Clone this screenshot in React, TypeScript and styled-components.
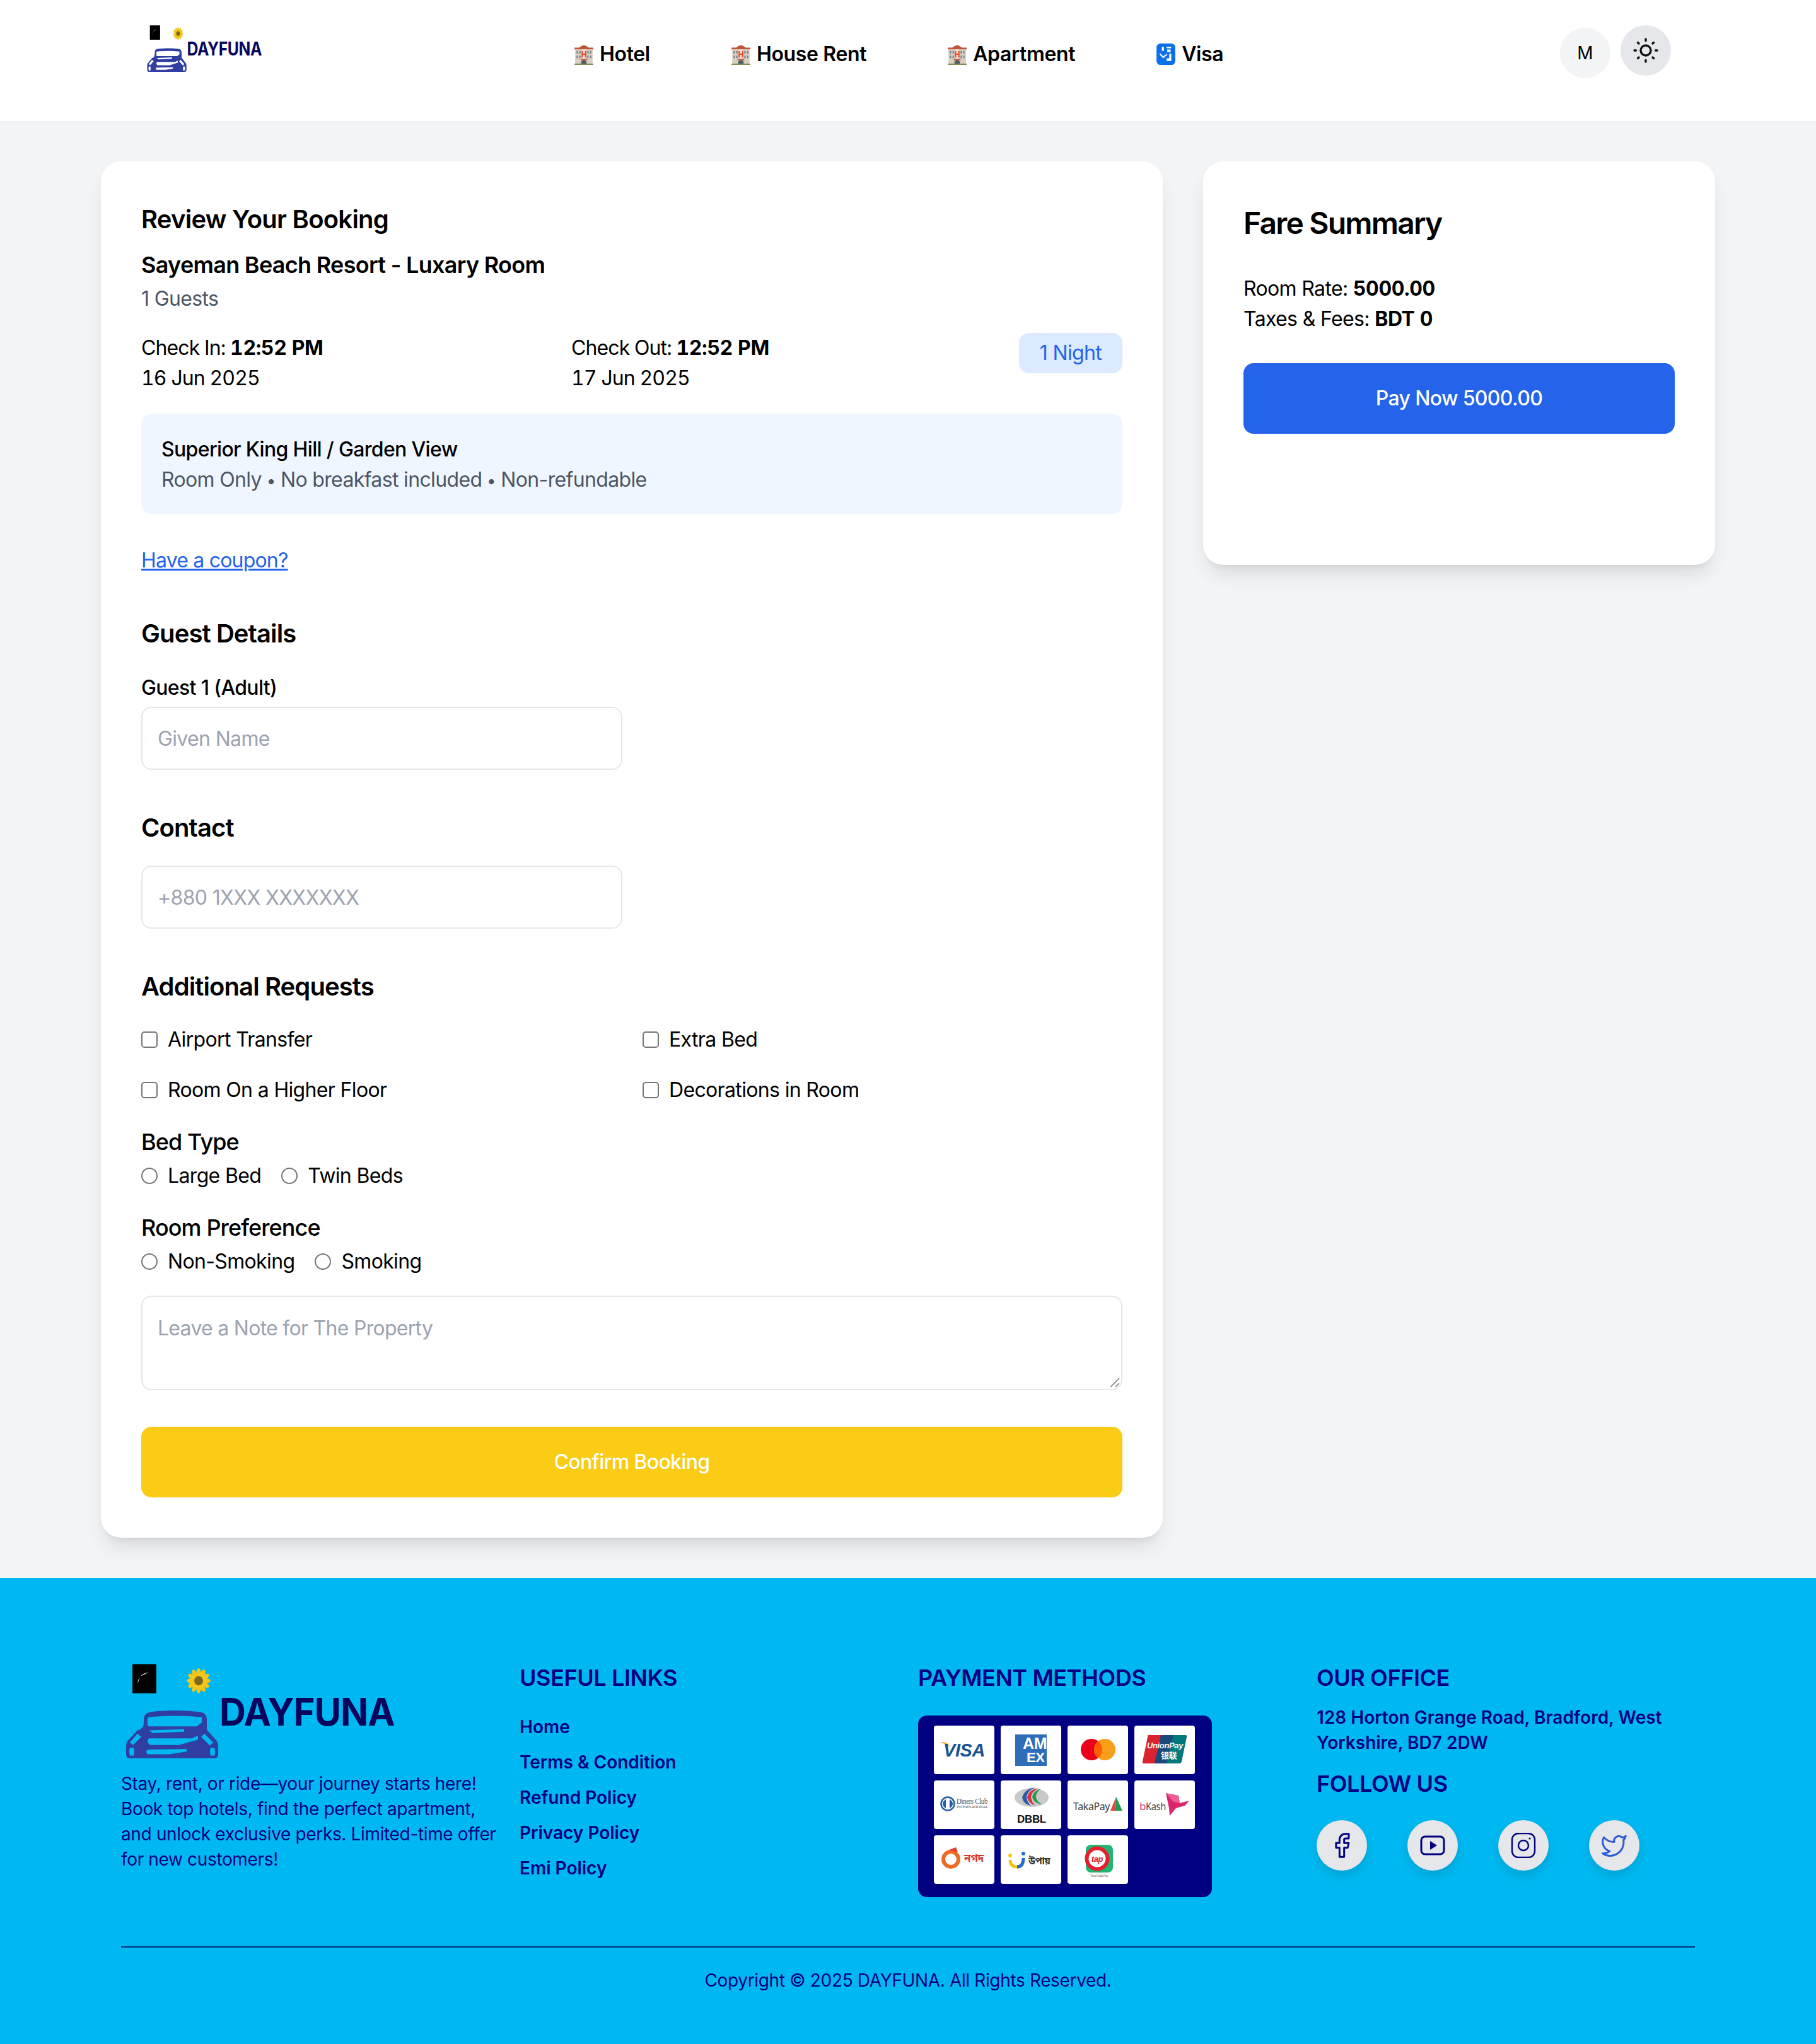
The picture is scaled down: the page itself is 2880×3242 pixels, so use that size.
import React from 'react';
import styled, { createGlobalStyle } from 'styled-components';
import { Facebook, Twitter } from 'lucide-react';

const NAVY = '#000080';

const GlobalStyle = createGlobalStyle`
  * { box-sizing: border-box; }
  html, body { margin: 0; padding: 0; }
  body {
    background: #f3f4f6;
    color: #000;
    font-family: Inter, "Noto Sans", sans-serif;
    font-size: 32px;
    line-height: 48px;
    letter-spacing: -0.65px;
  }
  b { letter-spacing: -0.4px; font-variant-numeric: tabular-nums; }
`;

const Header = styled.header`
  display: flex;
  align-items: flex-start;
  height: 192px;
  padding: 34px 230px 0 230px;
  background: #fff;
  box-shadow: 0 2px 4px rgba(0, 0, 0, 0.02);
`;

const LogoSlot = styled.div`
  flex: none;
  width: 680px;
`;

const Nav = styled.nav`
  flex: 1;
  display: flex;
  gap: 128px;
  padding-top: 28px;
`;

const NavItem = styled.a`
  display: flex;
  align-items: center;
  gap: 9px;
  font-weight: 600;
  color: #000;
  letter-spacing: -0.35px;
`;

const HeaderActions = styled.div`
  display: flex;
  gap: 16px;
  padding-top: 6px;
`;

const RoundButton = styled.button<{ $bg: string; $lift?: boolean }>`
  display: flex;
  align-items: center;
  justify-content: center;
  width: 80px;
  height: 80px;
  border: 0;
  border-radius: 50%;
  background: ${({ $bg }) => $bg};
  color: #000;
  font: inherit;
  font-size: 28px;
  font-weight: 400;
  margin-top: ${({ $lift }) => ($lift ? '0' : '4px')};
`;

const Main = styled.main`
  display: grid;
  grid-template-columns: 1684px 812px;
  gap: 64px;
  align-items: start;
  padding: 64px 160px;
`;

const Card = styled.section`
  background: #fff;
  border-radius: 32px;
  padding: 64px;
  box-shadow: 0 20px 30px -6px rgba(0, 0, 0, 0.1), 0 8px 12px -8px rgba(0, 0, 0, 0.1);
`;

const SummaryCard = styled(Card)`
  height: 640px;
`;

const CardTitle = styled.h2`
  margin: 0;
  font-size: 40px;
  line-height: 56px;
  font-weight: 600;
  letter-spacing: -0.75px;
`;

const SummaryTitle = styled.h2`
  margin: 2px 0 48px;
  font-size: 48px;
  line-height: 64px;
  font-weight: 600;
  letter-spacing: -1.8px;
`;

const RoomName = styled.h3`
  margin: 16px 0 0;
  font-size: 36px;
  line-height: 56px;
  font-weight: 600;
  letter-spacing: -0.7px;
`;

const GuestCount = styled.p`
  margin: 2px 0 0;
  color: #4b5563;
`;

const StayRow = styled.div`
  display: grid;
  grid-template-columns: 682px 1fr 164px;
  margin-top: 30px;
  font-variant-numeric: tabular-nums;
  letter-spacing: -0.9px;
`;

const Badge = styled.span`
  align-self: start;
  padding: 8px 0;
  border-radius: 16px;
  background: #dbeafe;
  color: #2563eb;
  text-align: center;
  font-variant-numeric: normal;
  letter-spacing: -0.65px;
`;

const RoomBox = styled.div`
  margin-top: 32px;
  padding: 33px 32px 30px;
  height: 159px;
  border-radius: 16px;
  background: #eff6ff;
`;

const RoomTitle = styled.div`
  font-weight: 500;
`;

const RoomTerms = styled.div`
  color: #4b5563;
`;

const Dot = styled.span`
  display: inline-block;
  width: 30px;
  text-align: center;
  font-size: 26px;
  letter-spacing: 0;
`;

const CouponLink = styled.a`
  display: inline-block;
  margin-top: 50px;
  color: #2563eb;
  text-decoration: underline;
  letter-spacing: -0.8px;
`;

const SectionTitle = styled.h3<{ $top: number }>`
  margin: ${({ $top }) => $top}px 0 0;
  font-size: 40px;
  line-height: 56px;
  font-weight: 600;
  letter-spacing: -0.9px;
`;

const FieldLabel = styled.div`
  margin-top: 34px;
  margin-bottom: 6px;
  font-weight: 500;
`;

const TextInput = styled.input<{ $top?: number }>`
  display: block;
  width: 763px;
  height: 100px;
  margin-top: ${({ $top }) => $top ?? 0}px;
  padding: 0 24px;
  border: 2px solid #e5e7eb;
  border-radius: 16px;
  background: #fff;
  font: inherit;
  letter-spacing: -0.65px;
  &::placeholder { color: #9ca3af; opacity: 1; }
`;

const NoteWrap = styled.div`
  position: relative;
  margin-top: 30px;
`;

const NoteInput = styled.textarea`
  display: block;
  width: 100%;
  height: 150px;
  padding: 26px 24px;
  border: 2px solid #e5e7eb;
  border-radius: 16px;
  background: #fff;
  font: inherit;
  letter-spacing: -0.72px;
  resize: none;
  &::placeholder { color: #9ca3af; opacity: 1; }
`;

const ResizeGrip = styled.svg`
  position: absolute;
  right: 3px;
  bottom: 3px;
`;

const CheckGrid = styled.div`
  display: grid;
  grid-template-columns: 1fr 1fr;
  gap: 32px 34px;
  margin-top: 32px;
`;

const OptionLabel = styled.label`
  display: flex;
  align-items: center;
  gap: 16px;
`;

const Tick = styled.input<{ $round?: boolean }>`
  appearance: none;
  flex: none;
  width: 26px;
  height: 26px;
  margin: 0;
  border: 2px solid #767676;
  border-radius: ${({ $round }) => ($round ? '50%' : '5px')};
  background: #fff;
`;

const GroupTitle = styled.div<{ $top: number }>`
  margin-top: ${({ $top }) => $top}px;
  font-size: 36px;
  line-height: 56px;
  font-weight: 500;
  letter-spacing: -0.9px;
`;

const RadioRow = styled.div`
  display: flex;
  gap: 32px;
  margin-top: 2px;
`;

const SubmitButton = styled.button<{ $bg: string }>`
  display: block;
  width: 100%;
  height: 112px;
  border: 0;
  border-radius: 16px;
  background: ${({ $bg }) => $bg};
  color: #fff;
  font: inherit;
  font-weight: 500;
  letter-spacing: inherit;
`;

const ConfirmWrap = styled.div`
  margin-top: 58px;
`;

const PayWrap = styled.div`
  margin-top: 46px;
`;

const Footer = styled.footer`
  height: 740px;
  padding: 124px 192px 0;
  background: #00b8f1;
  color: ${NAVY};
  font-size: 28px;
  line-height: 40px;
  letter-spacing: -0.35px;
`;

const FooterGrid = styled.div`
  display: grid;
  grid-template-columns: repeat(4, 600px);
  gap: 32px;
  height: 462px;
  border-bottom: 2px solid rgba(0, 0, 80, 0.75);
`;

const FooterBlurb = styled.p`
  margin: 4px 0 0;
`;

const FooterHeading = styled.h4<{ $top?: number }>`
  margin: ${({ $top }) => $top ?? 0}px 0 0;
  font-size: 36px;
  line-height: 48px;
  font-weight: 600;
  letter-spacing: -0.4px;
`;

const LinkList = styled.ul`
  list-style: none;
  margin: 34px 0 0;
  padding: 0;
  display: flex;
  flex-direction: column;
  gap: 16px;
`;

const FooterLink = styled.a`
  font-weight: 600;
  color: ${NAVY};
  letter-spacing: 0;
`;

const PaymentPanel = styled.div`
  display: grid;
  grid-template-columns: repeat(4, 96px);
  grid-auto-rows: 77px;
  gap: 10px;
  width: 466px;
  height: 288px;
  margin-top: 36px;
  padding: 16px 25px;
  border-radius: 14px;
  background: ${NAVY};
`;

const PaymentTile = styled.div`
  border-radius: 4px;
  background: #fff;
  overflow: hidden;
  svg { display: block; }
`;

const OfficeText = styled.p`
  margin: 19px 0 0;
  font-weight: 600;
  letter-spacing: 0;
`;

const SocialRow = styled.div`
  display: flex;
  gap: 64px;
  margin-top: 34px;
`;

const SocialButton = styled.a<{ $color?: string }>`
  display: flex;
  align-items: center;
  justify-content: center;
  width: 80px;
  height: 80px;
  border-radius: 50%;
  background: #e5e7eb;
  color: ${({ $color }) => $color ?? NAVY};
  box-shadow: 0 8px 16px rgba(0, 0, 0, 0.12);
`;

const Copyright = styled.div`
  padding-top: 32px;
  text-align: center;
`;

function Logo({ width, height, ink }: { width: number; height: number; ink: string }) {
  return (
    <svg width={width} height={height} viewBox="0 0 450 160" preserveAspectRatio="none">
      <rect x="18" y="12" width="38" height="44" rx="1" fill="#000" />
      <path d="M26 42 Q27 27 44 24 Q33 29 30 31 Q28 36 26 42Z" fill="#fff" />
      <g fill="#f5c518">
        {[0, 30, 60, 90, 120, 150, 180, 210, 240, 270, 300, 330].map((a) => (
          <ellipse key={a} cx="123" cy="26" rx="3.6" ry="8" transform={`rotate(${a} 123 37)`} />
        ))}
      </g>
      <circle cx="123" cy="37" r="7" fill="#7a6a1e" />
      <text x="156" y="105" fontFamily="Inter, sans-serif" fontWeight="700" fontSize="58" letterSpacing="-1" fill={ink}>
        DAYFUNA
      </text>
      <path
        fillRule="evenodd"
        fill="#2f3ea0"
        d="M36 96 Q36 85 48 84 Q85 80 124 84 Q136 85 136 96 V111 L152 128 Q154 131 154 136 V148 Q154 154 148 154 H14 Q8 154 8 148 V136 Q8 131 10 128 L26 112 Q36 110 36 100Z
        M44 92 Q42 92 42 96 V103 Q42 106 46 106 H120 L128 100 V92 Q85 88 44 92Z
        M44 112 L100 110 V114 L50 116Z
        M44 124 H112 L122 120 V126 L92 134 H46 Q40 130 44 124Z
        M42 141 Q38 144 42 148 H76 L104 144 V140Z
        M26 117 L14 130 L19 134 L32 122Z
        M132 117 L127 122 L141 135 L146 130Z
        M14 138 Q12 144 14 150 H20 Q22 144 20 138Z
        M142 138 Q140 144 142 150 H148 Q150 144 148 138Z"
      />
    </svg>
  );
}

function HotelEmoji() {
  return (
    <svg width="32" height="34" viewBox="0 0 30 32">
      <path d="M1 6 L8 6 Q15 -1 22 6 L29 6 V9 H1Z" fill="#c0553a" />
      <rect x="2" y="9" width="26" height="23" fill="#d9cfc0" />
      <rect x="12" y="9" width="6" height="23" fill="#efe6da" />
      <path d="M12.5 11 V21 M17.5 11 V21 M12.5 16 H17.5" stroke="#e2492f" strokeWidth="2" fill="none" />
      <g fill="#77838f">
        <rect x="4" y="11" width="2" height="4" />
        <rect x="8" y="11" width="2" height="4" />
        <rect x="20" y="11" width="2" height="4" />
        <rect x="24" y="11" width="2" height="4" />
        <rect x="4" y="18" width="2" height="4" />
        <rect x="8" y="18" width="2" height="4" />
        <rect x="20" y="18" width="2" height="4" />
        <rect x="24" y="18" width="2" height="4" />
      </g>
      <path d="M11 32 V27 Q15 22 19 27 V32Z" fill="#4d5b66" />
      <rect x="10" y="23" width="10" height="2" fill="#c0553a" />
      <rect x="1" y="30" width="28" height="2" fill="#7e8c55" />
    </svg>
  );
}

function PassportEmoji() {
  return (
    <svg width="32" height="34" viewBox="0 0 30 32">
      <rect width="28" height="32" x="1" rx="6" fill="#0a6fe8" />
      <g fill="#fff">
        <path d="M9 5 h3 v6 h-3z" />
        <path d="M16 5 h7 v2 h-7z M17 9 h5 v4 h-5z" />
        <path d="M6 14 L11 19 L17 15 L17 17 L11 22 L6 17Z" />
        <path d="M20 15 h3 v11 h-3z M16 22 h7 v4 h-7z" />
      </g>
    </svg>
  );
}

function SunIcon() {
  return (
    <svg width="40" height="40" viewBox="0 0 40 40" fill="none" stroke="#111" strokeWidth="3.4" strokeLinecap="round">
      <circle cx="20" cy="20" r="8" />
      <path d="M20 2 v2.5 M20 35.5 v2.5 M2 20 h2.5 M35.5 20 h2.5 M7.5 7.5 l1.5 1.5 M31 31 l1.5 1.5 M7.5 32.5 l1.5 -1.5 M31 9 l1.5 -1.5" />
    </svg>
  );
}

function YoutubeIcon() {
  return (
    <svg width="40" height="40" viewBox="0 0 40 40" fill="none" stroke="currentColor" strokeWidth="3">
      <rect x="2" y="6" width="36" height="28" rx="6" />
      <path d="M16 13 L27 20 L16 27Z" fill="currentColor" stroke="none" />
    </svg>
  );
}

function InstagramIcon() {
  return (
    <svg width="40" height="40" viewBox="0 0 40 40" fill="none" stroke="currentColor" strokeWidth="2.4">
      <rect x="2" y="1" width="36" height="38" rx="10" />
      <circle cx="20" cy="20" r="8" />
      <circle cx="30" cy="9" r="1.6" fill="currentColor" stroke="none" />
    </svg>
  );
}

const LOGO_FONT = 'Liberation Sans, sans-serif';

const PAYMENT_LOGOS: React.ReactNode[] = [
  <>
    <path d="M12 27 Q20 25 26 34 Q22 29 12 27Z" fill="#f4a51c" stroke="#f4a51c" />
    <text x="15" y="49" fontFamily={LOGO_FONT} fontWeight="700" fontStyle="italic" fontSize="29" textLength="66" lengthAdjust="spacingAndGlyphs" fill="#1a5190">VISA</text>
  </>,
  <>
    <rect x="23" y="14" width="50" height="50" fill="#2e6db8" />
    <svg x="23" y="14" width="50" height="50" viewBox="0 0 50 50">
      <text x="12" y="23" fontFamily={LOGO_FONT} fontWeight="700" fontSize="25" fill="#fff">AM</text>
      <text x="18" y="44" fontFamily={LOGO_FONT} fontWeight="700" fontSize="22" fill="#fff">EX</text>
    </svg>
  </>,
  <>
    <circle cx="38" cy="38" r="17" fill="#eb001b" />
    <circle cx="59" cy="38" r="17" fill="#f79e1b" />
    <path d="M48.5 24.6 A17 17 0 0 1 48.5 51.4 A17 17 0 0 1 48.5 24.6Z" fill="#ff5f00" />
  </>,
  <>
    <path d="M22 15 H46 Q48 15 47 18 L38 57 Q37 60 34 60 H15 Q12 60 13 57 L21 18 Q21 15 22 15Z" fill="#d9232e" />
    <path d="M42 15 H66 L55 60 H32Z" fill="#1a4a7c" />
    <path d="M62 15 H81 Q84 15 83 18 L75 57 Q74 60 71 60 H51Z" fill="#00797b" />
    <text x="20" y="36" fontFamily={LOGO_FONT} fontWeight="700" fontStyle="italic" fontSize="13" textLength="57" lengthAdjust="spacingAndGlyphs" fill="#fff">UnionPay</text>
    <text x="42" y="52" fontFamily="Noto Sans CJK SC, sans-serif" fontWeight="700" fontSize="13" fill="#fff">银联</text>
  </>,
  <>
    <circle cx="22" cy="37" r="10.5" fill="#fff" stroke="#1f5ca8" strokeWidth="2.5" />
    <path d="M19 30 V44 Q14 41 14 37 Q14 33 19 30Z M25 30 V44 Q30 41 30 37 Q30 33 25 30Z" fill="#1f5ca8" />
    <text x="36" y="37" fontFamily="Liberation Serif, serif" fontSize="12" textLength="49" lengthAdjust="spacingAndGlyphs" fill="#555">Diners Club</text>
    <text x="36" y="44" fontFamily="Liberation Serif, serif" fontSize="5.5" textLength="50" lengthAdjust="spacingAndGlyphs" fill="#555">INTERNATIONAL</text>
  </>,
  <>
    <ellipse cx="49" cy="27" rx="27" ry="15" fill="#c9c9c9" />
    <path d="M34 27 Q38 13 55 11 Q42 16 41 27 Q42 35 48 40 Q36 38 34 27Z" fill="#2d5aa8" />
    <path d="M42 27 Q44 15 60 12 Q49 18 48 26 Q49 35 55 40 Q44 36 42 27Z" fill="#d8343f" />
    <path d="M50 26 Q52 16 64 13 Q56 19 56 26 Q57 34 66 38 Q52 36 50 26Z" fill="#25a04a" />
    <text x="49" y="67" textAnchor="middle" fontFamily={LOGO_FONT} fontWeight="700" fontSize="17" fill="#111">DBBL</text>
  </>,
  <>
    <text x="9" y="47" fontFamily="Noto Sans, sans-serif" fontSize="15.5" textLength="58" lengthAdjust="spacingAndGlyphs" fill="#333">TakaPay</text>
    <path d="M77 26 L87 48 H76Z" fill="#1e9c50" />
    <path d="M77 26 L76 48 H68Z" fill="#e1463f" />
  </>,
  <>
    <text x="8" y="47" fontFamily="Noto Sans, sans-serif" fontSize="17" fill="#d8347c">b</text>
    <text x="18" y="47" fontFamily="Noto Sans, sans-serif" fontSize="17" textLength="32" lengthAdjust="spacingAndGlyphs" fill="#444">Kash</text>
    <path d="M50 20 L70 24 L72 36 L87 32 L80 40 L66 44 L56 56 L55 44Z" fill="#d9266f" />
    <path d="M50 20 L62 34 L72 36 L70 24Z" fill="#ee5f96" />
  </>,
  <>
    <circle cx="27" cy="38" r="12" fill="none" stroke="#ef6a22" strokeWidth="6" />
    <path d="M24 23 L35 19 L38 27Z" fill="#e53d2b" />
    <text x="48" y="42" fontFamily="Noto Sans, Noto Sans Bengali, sans-serif" fontWeight="700" fontSize="17" fill="#e0352b">নগদ</text>
  </>,
  <>
    <path d="M15 39 Q15 50 26 50 Q36 50 36 36" fill="none" stroke="#f7c51c" strokeWidth="5" />
    <path d="M26 50 Q36 50 36 36" fill="none" stroke="#1d6fd1" strokeWidth="5" />
    <circle cx="15" cy="32" r="3" fill="#f7c51c" />
    <circle cx="36" cy="29" r="3" fill="#1d6fd1" />
    <text x="44" y="46" fontFamily="Noto Sans, Noto Sans Bengali, sans-serif" fontWeight="700" fontSize="15" fill="#333">উপায়</text>
  </>,
  <>
    <rect x="29" y="15" width="43" height="44" rx="8" fill="#22b573" />
    <circle cx="47" cy="37" r="19" fill="#fff" />
    <circle cx="47" cy="37" r="16.5" fill="none" stroke="#e3202c" strokeWidth="6" />
    <text x="47" y="42" textAnchor="middle" fontFamily={LOGO_FONT} fontWeight="700" fontStyle="italic" fontSize="13" fill="#e3202c">tap</text>
    <text x="50" y="66" textAnchor="middle" fontFamily={LOGO_FONT} fontSize="4.6" fill="#777">Trust Axiata Pay</text>
  </>,
];

export default function App() {
  return (
    <>
      <GlobalStyle />
      <Header>
        <LogoSlot>
          <Logo width={192} height={83} ink="#05055e" />
        </LogoSlot>
        <Nav>
          <NavItem><HotelEmoji />Hotel</NavItem>
          <NavItem><HotelEmoji />House Rent</NavItem>
          <NavItem><HotelEmoji />Apartment</NavItem>
          <NavItem><PassportEmoji />Visa</NavItem>
        </Nav>
        <HeaderActions>
          <RoundButton $bg="#f3f4f6">M</RoundButton>
          <RoundButton $bg="#e5e7eb" $lift><SunIcon /></RoundButton>
        </HeaderActions>
      </Header>

      <Main>
        <Card>
          <CardTitle>Review Your Booking</CardTitle>
          <RoomName>Sayeman Beach Resort - Luxary Room</RoomName>
          <GuestCount>1 Guests</GuestCount>
          <StayRow>
            <div>
              Check In: <b>12:52 PM</b>
              <br />
              16 Jun 2025
            </div>
            <div>
              Check Out: <b>12:52 PM</b>
              <br />
              17 Jun 2025
            </div>
            <Badge>1 Night</Badge>
          </StayRow>
          <RoomBox>
            <RoomTitle>Superior King Hill / Garden View</RoomTitle>
            <RoomTerms>Room Only<Dot>•</Dot>No breakfast included<Dot>•</Dot>Non-refundable</RoomTerms>
          </RoomBox>
          <CouponLink>Have a coupon?</CouponLink>

          <SectionTitle $top={64}>Guest Details</SectionTitle>
          <FieldLabel>Guest 1 (Adult)</FieldLabel>
          <TextInput placeholder="Given Name" />

          <SectionTitle $top={64}>Contact</SectionTitle>
          <TextInput $top={32} placeholder="+880 1XXX XXXXXXX" />

          <SectionTitle $top={64}>Additional Requests</SectionTitle>
          <CheckGrid>
            <OptionLabel><Tick type="checkbox" />Airport Transfer</OptionLabel>
            <OptionLabel><Tick type="checkbox" />Extra Bed</OptionLabel>
            <OptionLabel><Tick type="checkbox" />Room On a Higher Floor</OptionLabel>
            <OptionLabel><Tick type="checkbox" />Decorations in Room</OptionLabel>
          </CheckGrid>

          <GroupTitle $top={30}>Bed Type</GroupTitle>
          <RadioRow>
            <OptionLabel><Tick type="radio" $round name="bed" />Large Bed</OptionLabel>
            <OptionLabel><Tick type="radio" $round name="bed" />Twin Beds</OptionLabel>
          </RadioRow>

          <GroupTitle $top={30}>Room Preference</GroupTitle>
          <RadioRow>
            <OptionLabel><Tick type="radio" $round name="smoke" />Non-Smoking</OptionLabel>
            <OptionLabel><Tick type="radio" $round name="smoke" />Smoking</OptionLabel>
          </RadioRow>

          <NoteWrap>
            <NoteInput placeholder="Leave a Note for The Property" />
            <ResizeGrip width="18" height="18" viewBox="0 0 18 18" stroke="#6b6b6b" strokeWidth="1.4" fill="none">
              <path d="M2 16 L16 2 M10 16 L16 10" />
            </ResizeGrip>
          </NoteWrap>
          <ConfirmWrap>
            <SubmitButton $bg="#facc15">Confirm Booking</SubmitButton>
          </ConfirmWrap>
        </Card>

        <SummaryCard>
          <SummaryTitle>Fare Summary</SummaryTitle>
          <div>Room Rate: <b>5000.00</b></div>
          <div>Taxes &amp; Fees: <b>BDT 0</b></div>
          <PayWrap>
            <SubmitButton $bg="#2563eb">Pay Now 5000.00</SubmitButton>
          </PayWrap>
        </SummaryCard>
      </Main>

      <Footer>
        <FooterGrid>
          <div>
            <Logo width={450} height={168} ink="#05055e" />
            <FooterBlurb>
              Stay, rent, or ride—your journey starts here! Book top hotels, find the perfect apartment, and unlock
              exclusive perks. Limited-time offer for new customers!
            </FooterBlurb>
          </div>
          <div>
            <FooterHeading $top={10}>USEFUL LINKS</FooterHeading>
            <LinkList>
              {['Home', 'Terms & Condition', 'Refund Policy', 'Privacy Policy', 'Emi Policy'].map((label) => (
                <li key={label}><FooterLink>{label}</FooterLink></li>
              ))}
            </LinkList>
          </div>
          <div>
            <FooterHeading $top={10}>PAYMENT METHODS</FooterHeading>
            <PaymentPanel>
              {PAYMENT_LOGOS.map((logo, i) => (
                <PaymentTile key={i}>
                  <svg width="96" height="77" viewBox="0 0 96 77">{logo}</svg>
                </PaymentTile>
              ))}
            </PaymentPanel>
          </div>
          <div>
            <FooterHeading $top={10}>OUR OFFICE</FooterHeading>
            <OfficeText>128 Horton Grange Road, Bradford, West Yorkshire, BD7 2DW</OfficeText>
            <FooterHeading $top={21}>FOLLOW US</FooterHeading>
            <SocialRow>
              <SocialButton><Facebook size={44} strokeWidth={1.6} /></SocialButton>
              <SocialButton><YoutubeIcon /></SocialButton>
              <SocialButton><InstagramIcon /></SocialButton>
              <SocialButton $color="#2b59d9"><Twitter size={44} strokeWidth={1.6} /></SocialButton>
            </SocialRow>
          </div>
        </FooterGrid>
        <Copyright>Copyright © 2025 DAYFUNA. All Rights Reserved.</Copyright>
      </Footer>
    </>
  );
}
